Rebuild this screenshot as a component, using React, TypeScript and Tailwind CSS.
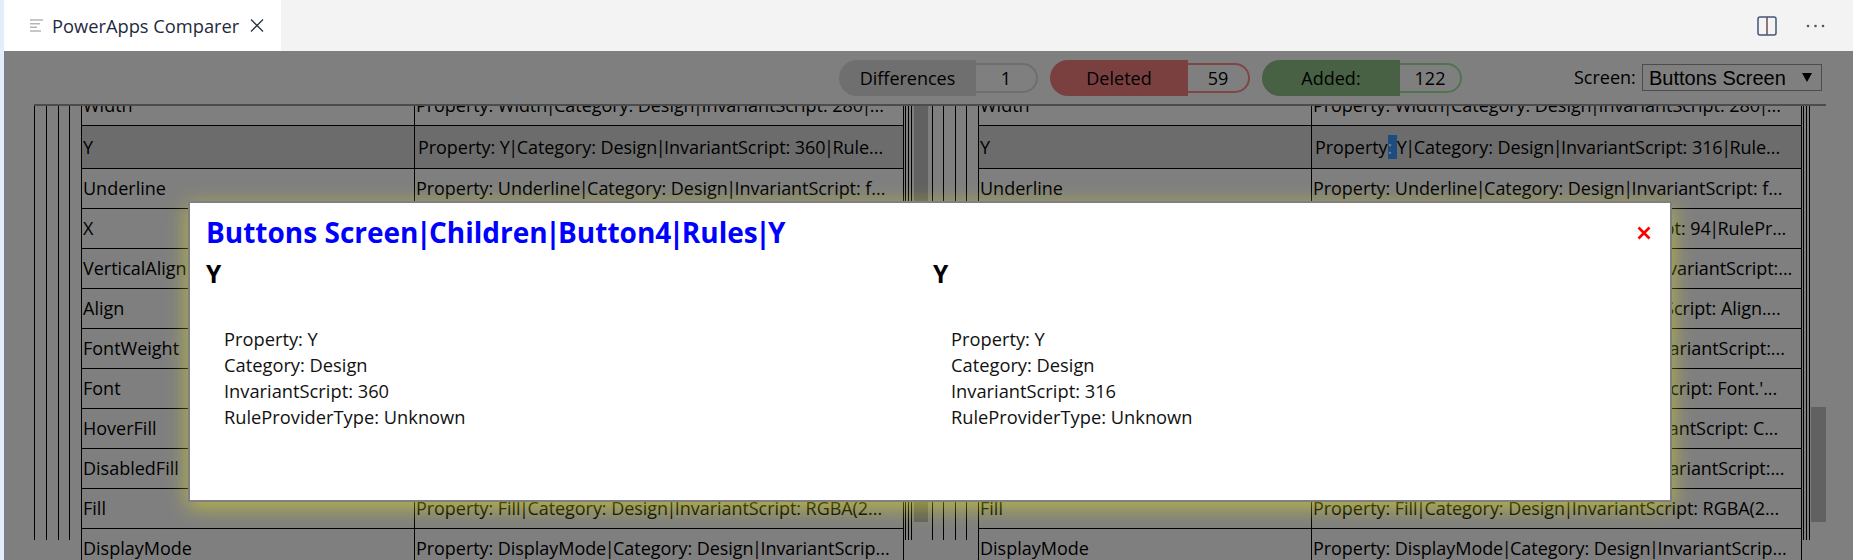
import React from "react";

const SANS = "font-['Open_Sans','Noto_Sans',sans-serif]";

type Row = { name: string; text: string };

const rows: Row[] = [
  { name: "Width", text: "Property: Width|Category: Design|InvariantScript: 280|..." },
  { name: "Y", text: "Property: Y|Category: Design|InvariantScript: 360|Rule..." },
  { name: "Underline", text: "Property: Underline|Category: Design|InvariantScript: f..." },
  { name: "X", text: "Property: X|Category: Design|InvariantScript: 94|RulePr..." },
  { name: "VerticalAlign", text: "Property: VerticalAlign|Category: Design|InvariantScript:..." },
  { name: "Align", text: "Property: Align|Category: Design|InvariantScript: Align...." },
  { name: "FontWeight", text: "Property: FontWeight|Category: Design|InvariantScript:..." },
  { name: "Font", text: "Property: Font|Category: Design|InvariantScript: Font.'..." },
  { name: "HoverFill", text: "Property: HoverFill|Category: Design|InvariantScript: C..." },
  { name: "DisabledFill", text: "Property: DisabledFill|Category: Design|InvariantScript:..." },
  { name: "Fill", text: "Property: Fill|Category: Design|InvariantScript: RGBA(2..." },
  { name: "DisplayMode", text: "Property: DisplayMode|Category: Design|InvariantScrip..." },
];

function Piped({ text, tight }: { text: string; tight: string }) {
  const parts = text.split("|");
  return (
    <>
      {parts.map((p, i) => (
        <React.Fragment key={i}>
          {i > 0 && <span className={tight}>|</span>}
          {p}
        </React.Fragment>
      ))}
    </>
  );
}

function Table({ side }: { side: "left" | "right" }) {
  return (
    <div className="-mt-[20px] border-l border-r border-black">
      {rows.map((r) => {
        const isY = r.name === "Y";
        return (
          <div key={r.name} className={`flex border-b border-black items-center ${isY ? "h-[43px] bg-[#d8d8d8]" : "h-[40px]"}`}>
            <div className="w-[333px] shrink-0 h-full flex items-center border-r border-black pl-[1px]">{r.name}</div>
            <div className={`flex-1 min-w-0 whitespace-pre overflow-hidden tracking-[-0.05px] ${isY ? "pl-[3px]" : "pl-[1px]"}`}>
              {side === "right" && isY ? (
                <>
                  Property<span className="bg-[#3a9bff] text-white">{": "}</span>
                  <Piped text="Y|Category: Design|InvariantScript: 316|Rule..." tight="mx-[-1.5px]" />
                </>
              ) : (
                <Piped text={r.text} tight="mx-[-1.5px]" />
              )}
            </div>
          </div>
        );
      })}
    </div>
  );
}

function Nest({ children, pads, end }: { children: React.ReactNode; pads: string; end: string }) {
  return <div className={`border-l border-r border-black h-full ${pads} ${end}`}>{children}</div>;
}

function Panel({ side }: { side: "left" | "right" }) {
  const isLeft = side === "left";
  return (
    <div className="h-full overflow-hidden w-[878px]">
      <Nest pads={isLeft ? "pl-[11px]" : "pl-[10px]"} end="pr-[2px]">
        <Nest pads="pl-[11px]" end="pr-[2px]">
          <Nest pads="pl-[10px]" end="pr-[1px]">
            <div className="h-full pl-[11px] border-l border-black">
              <Table side={side} />
            </div>
          </Nest>
        </Nest>
      </Nest>
    </div>
  );
}

function Pill({ label, count, fill, ring, width }: { label: string; count: string; fill: string; ring: string; width: string }) {
  return (
    <div className="flex items-center">
      <div className={`${width} h-[36px] pt-[2px] rounded-l-[18px] flex items-center justify-center ${fill}`}>{label}</div>
      <div className={`w-[62px] h-[30px] pt-[1px] rounded-r-[15px] border-2 border-l-0 flex items-center justify-center ${ring}`}>{count}</div>
    </div>
  );
}

function Column({ value }: { value: string }) {
  return (
    <div className="w-[615px] shrink-0">
      <div className="text-[24.5px] leading-[30px] font-bold text-black">Y</div>
      <div className="mt-[37px] pl-[18px] text-[18.3px] leading-[26px] text-[#111]">
        <div>Property: Y</div>
        <div>Category: Design</div>
        <div>InvariantScript: {value}</div>
        <div>RuleProviderType: Unknown</div>
      </div>
    </div>
  );
}

export default function App() {
  return (
    <div className={`relative w-[1853px] h-[560px] overflow-hidden bg-[#e3eefa] pl-[4px] flex flex-col text-black ${SANS}`}>
      <div className="h-[51px] shrink-0 bg-[#f3f3f3] flex items-stretch">
        <div className="w-[277px] bg-white flex items-center pl-[26px] text-[#1e2a40]">
          <svg width="13" height="13" viewBox="0 0 13 13" className="mr-[9px]">
            <path d="M0 1h13M0 4.7h10M0 8.3h7M0 12h11" stroke="#b5b5b5" strokeWidth="1.4" />
          </svg>
          <span className="text-[18.3px]">PowerApps Comparer</span>
          <svg width="14" height="13" viewBox="0 0 14 13" className="ml-[11px] -mt-[1px]">
            <path d="M1 .5l12 12M13 .5L1 12.5" stroke="#2c3445" strokeWidth="1.3" />
          </svg>
        </div>
        <div className="flex-1 flex items-center justify-end gap-[29px] pr-[28px]">
          <svg width="20" height="20" viewBox="0 0 20 20">
            <rect x="1" y="1" width="18" height="18" rx="2" fill="none" stroke="#44557a" strokeWidth="1.5" />
            <path d="M10 1v18" stroke="#6d4c4c" strokeWidth="1.5" />
          </svg>
          <svg width="19" height="4" viewBox="0 0 19 4">
            <circle cx="2" cy="2" r="1.3" fill="#555" />
            <circle cx="9.5" cy="2" r="1.3" fill="#555" />
            <circle cx="17" cy="2" r="1.3" fill="#555" />
          </svg>
        </div>
      </div>

      <div className="flex-1 min-h-0 bg-white flex flex-col">
        <div className="h-[53px] shrink-0 flex items-center pl-[835px] text-[18px]">
          <div className="flex gap-[12px]">
            <Pill label="Differences" count="1" fill="bg-[#dedede]" ring="border-[#dcdcdc]" width="w-[137px]" />
            <Pill label="Deleted" count="59" fill="bg-[#f58080]" ring="border-[#ff8c8c]" width="w-[138px]" />
            <Pill label="Added:" count="122" fill="bg-[#90c088]" ring="border-[#a0e8a0]" width="w-[138px]" />
          </div>
          <span className="ml-[112px] w-[68px] whitespace-nowrap">Screen:</span>
          <div className="w-[180px] h-[27px] border border-[#999] flex items-center justify-between pl-[6px] pr-[9px] text-[20px] font-['Liberation_Sans',sans-serif]">
            <span>Buttons Screen</span>
            <svg width="10" height="9" viewBox="0 0 10 9"><path d="M0 0h10L5 9z" fill="#000" /></svg>
          </div>
        </div>

        <div className="flex-1 min-h-0 ml-[30px] w-[1792px] border-t-2 border-[#999] flex text-[18px]">
          <Panel side="left" />
          <div className="w-[20px] shrink-0 flex flex-col h-full">
            <div className="ml-[2px] w-[14px] h-[416px] bg-[#c2c2c2]" />
          </div>
          <Panel side="right" />
          <div className="w-[15px] ml-[1px] shrink-0 flex flex-col">
            <div className="h-[301px]" />
            <div className="h-[115px] bg-[#c2c2c2]" />
          </div>
        </div>
      </div>

      {/* overlay */}
      <div className="absolute left-[4px] right-0 top-[51px] bottom-0 bg-black/50" />

      {/* modal */}
      <div className="absolute left-[188px] top-[201px] w-[1484px] h-[301px] bg-white border-2 border-[#808080] shadow-[0_5px_20px_0_rgba(255,255,0,0.45)] pl-[16px] pt-[11px]">
        <svg width="14" height="14" viewBox="0 0 14 14" className="absolute right-[19px] top-[23px]">
          <path d="M1.5 1.5l11 11M12.5 1.5l-11 11" stroke="#f00" strokeWidth="2.6" />
        </svg>
        <div className="text-[28px] leading-[36px] font-bold text-[#0000ff]">
          <Piped text="Buttons Screen|Children|Button4|Rules|Y" tight="mx-[-2.5px]" />
        </div>
        <div className="flex mt-[9px] gap-[112px]">
          <Column value="360" />
          <Column value="316" />
        </div>
      </div>
    </div>
  );
}
